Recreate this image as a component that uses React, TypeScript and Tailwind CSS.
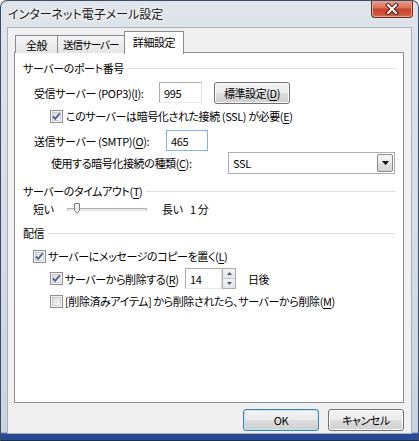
import React from "react";

const font = "font-['Noto_Sans_CJK_JP','Noto_Sans',sans-serif] [font-feature-settings:'palt']";

const Acc = ({ k }: { k: string }) => (
  <>
    (<span className="underline underline-offset-2">{k}</span>)
  </>
);

const Check = ({ checked }: { checked?: boolean }) => (
  <svg width="13" height="13" viewBox="0 0 13 13" className="shrink-0">
    <defs>
      <linearGradient id="cbg" x1="0" y1="0" x2="1" y2="1">
        <stop offset="0" stopColor="#d8d8d8" />
        <stop offset="1" stopColor="#fafafa" />
      </linearGradient>
    </defs>
    <rect x="0.5" y="0.5" width="12" height="12" fill="#f4f4f4" stroke="#8e8f8f" />
    <rect x="2.5" y="2.5" width="8" height="8" fill="url(#cbg)" stroke="#b8b8b8" strokeWidth="0.6" />
    {checked && (
      <path d="M3 6.3 L5.2 8.8 L9.8 3.2" fill="none" stroke="#4a5f97" strokeWidth="1.8" />
    )}
  </svg>
);

const GroupHeader = ({ children }: { children: React.ReactNode }) => (
  <div className="flex h-4 items-center">
    <span>{children}</span>
    <div className="ml-[4px] h-px flex-1 bg-[#d5dfe5]" />
  </div>
);

const Input = ({ value, w, focus }: { value: string; w: string; focus?: boolean }) => (
  <div
    className={`${w} flex h-[21px] shrink-0 items-center border bg-white pl-[4px] ${
      focus ? "border-[#7eb4ea]" : "border-[#abadb3] border-b-[#e3e9ef] border-r-[#dbdfe6]"
    }`}
  >
    {value}
  </div>
);

const Button = ({ children, w, primary }: { children: React.ReactNode; w: string; primary?: boolean }) => (
  <div
    className={`${w} flex h-[22px] shrink-0 items-center justify-center rounded-[3px] border ${
      primary ? "border-[#3c7fb1] shadow-[inset_0_0_0_1px_#c2e4f6]" : "border-[#707070] shadow-[inset_0_0_0_1px_#fcfcfc]"
    } bg-[linear-gradient(#f2f2f2_0%,#ebebeb_49%,#dddddd_50%,#cfcfcf_100%)]`}
  >
    {children}
  </div>
);

export default function App() {
  return (
    <div className={`${font} relative flex h-[441px] w-[419px] flex-col overflow-hidden whitespace-nowrap rounded-t-[7px] border border-[#3b4b66] border-b-[#1b2d55] bg-[linear-gradient(#dfe4ea,#d4dbe4_60%,#c9d3df_98.2%,#2a4b94_98.6%)] text-[11px] leading-4 tracking-[-0.4px] text-black`}>
      {/* title bar */}
      <div className="flex h-[26px] shrink-0 items-start justify-between pl-[7px]">
        <span className="mt-[5px] text-[12px] tracking-normal text-[#1a1a1a] [text-shadow:0_0_6px_#ffffff,0_0_3px_#ffffff]">
          インターネット電子メール設定
        </span>
        <div className="mr-[5px] mt-[-1px] flex h-[18px] w-[42px] items-center justify-center rounded-b-[4px] border border-t-0 border-[#6d2a20] bg-[linear-gradient(#e8a99a_0%,#d9715d_45%,#c8412a_55%,#d06447_100%)] shadow-[inset_0_0_0_1px_#eaa28f]">
          <svg width="14" height="12" viewBox="0 0 14 12">
            <path d="M3 2 L11 10 M11 2 L3 10" stroke="#4a1a12" strokeWidth="4" strokeLinecap="square" />
            <path d="M3 2 L11 10 M11 2 L3 10" stroke="#ffffff" strokeWidth="2" strokeLinecap="square" />
          </svg>
        </div>
      </div>

      {/* client area */}
      <div className="mx-[6px] flex h-[407px] flex-col border border-[#a6b0bd] bg-[#f0f0f0] pl-[6px] pr-[7px] pt-[3px]">
        {/* tabs */}
        <div className="relative z-10 flex h-[22px] items-end pl-px">
          <div className="flex h-[18px] w-[43px] items-center justify-center border border-b-0 border-[#898c95] bg-[linear-gradient(#f6f6f6,#e4e4e4)]">
            全般
          </div>
          <div className="flex h-[18px] w-[68px] items-center border border-b-0 border-l-0 border-[#898c95] bg-[linear-gradient(#f6f6f6,#e4e4e4)] pl-[5px] text-[10.5px] tracking-[-1px]">
            送信サーバー
          </div>
          <div className="-mb-px -ml-[2px] flex h-[23px] w-[60px] items-center justify-center border border-b-0 border-[#898c95] bg-white pb-[2px]">
            詳細設定
          </div>
        </div>

        {/* panel */}
        <div className="-mt-px flex h-[351px] w-[390px] flex-col border border-[#898c95] bg-white px-[8px]">
          <div className="mt-[7px]">
            <GroupHeader>サーバーのポート番号</GroupHeader>
          </div>

          <div className="mt-[5px] flex h-[23px] items-center pl-[11px]">
            <span className="w-[125px] shrink-0">
              受信サーバー (POP3)<Acc k="I" />:
            </span>
            <Input value="995" w="w-[43px]" />
            <div className="ml-[12px]">
              <Button w="w-[76px]">
                標準設定<Acc k="D" />
              </Button>
            </div>
          </div>

          <div className="mt-[4px] flex h-4 items-center gap-[3px] pl-[27px]">
            <Check checked />
            <span>
              このサーバーは暗号化された接続 (SSL) が必要<Acc k="E" />
            </span>
          </div>

          <div className="mt-[6px] flex h-[21px] items-center pl-[11px]">
            <span className="w-[132px] shrink-0">
              送信サーバー (SMTP)<Acc k="O" />:
            </span>
            <Input value="465" w="w-[42px]" focus />
          </div>

          <div className="mt-px flex h-[22px] items-center pl-[28px]">
            <span className="w-[177px] shrink-0">
              使用する暗号化接続の種類<Acc k="C" />:
            </span>
            <div className="flex h-[22px] flex-1 items-center justify-between border border-[#abadb3] bg-white pl-[4px] pr-px">
              <span>SSL</span>
              <div className="flex h-[18px] w-[16px] items-center justify-center rounded-[2px] border border-[#8a8a8a] bg-[linear-gradient(#f4f4f4_0%,#ececec_49%,#e0e0e0_50%,#d6d6d6_100%)]">
                <svg width="7" height="4" viewBox="0 0 7 4">
                  <path d="M0 0 H7 L3.5 4 Z" fill="#000" />
                </svg>
              </div>
            </div>
          </div>

          <div className="mt-[9px]">
            <GroupHeader>
              サーバーのタイムアウト<Acc k="T" />
            </GroupHeader>
          </div>

          <div className="mt-[2px] flex h-4 items-center pl-[10px]">
            <span className="w-[34px] shrink-0">短い</span>
            <div className="relative h-[12px] w-[80px] shrink-0">
              <div className="absolute left-0 right-0 top-[5px] h-[3px] border border-[#b0b0b0] border-b-[#e8e8e8] bg-[#e7eaea]" />
              <svg className="absolute left-[7px] top-[0px]" width="6" height="11" viewBox="0 0 6 11">
                <path d="M0.5 0.5 H5.5 V7.5 L3 10.5 L0.5 7.5 Z" fill="#eeeeee" stroke="#7b7b7b" />
              </svg>
            </div>
            <span className="ml-[15px] w-[28px] shrink-0">長い</span>
            <span>1 分</span>
          </div>

          <div className="mt-[8px]">
            <GroupHeader>配信</GroupHeader>
          </div>

          <div className="mt-[7px] flex h-4 items-center gap-[2px] pl-[10px]">
            <Check checked />
            <span>
              サーバーにメッセージのコピーを置く<Acc k="L" />
            </span>
          </div>

          <div className="mt-[4px] flex h-[21px] items-center pl-[27px]">
            <Check checked />
            <span className="ml-[2px] w-[120px] shrink-0">
              サーバーから削除する<Acc k="R" />
            </span>
            <Input value="14" w="w-[37px]" />
            <div className="flex h-[21px] w-[14px] shrink-0 flex-col border border-[#abadb3]">
              <div className="flex flex-1 items-center justify-center border-b border-[#c5cbd3] bg-[linear-gradient(#f3f3f3,#e3e6ea)]">
                <svg width="5" height="3" viewBox="0 0 5 3">
                  <path d="M0 3 L2.5 0 L5 3 Z" fill="#4d5a75" />
                </svg>
              </div>
              <div className="flex flex-1 items-center justify-center bg-[linear-gradient(#f3f3f3,#e3e6ea)]">
                <svg width="5" height="3" viewBox="0 0 5 3">
                  <path d="M0 0 L5 0 L2.5 3 Z" fill="#4d5a75" />
                </svg>
              </div>
            </div>
            <span className="ml-[12px]">日後</span>
          </div>

          <div className="mt-[4px] flex h-4 items-center gap-[2px] pl-[27px]">
            <Check />
            <span>
              [削除済みアイテム] から削除されたら、サーバーから削除<Acc k="M" />
            </span>
          </div>
        </div>

        {/* buttons */}
        <div className="mt-[6px] flex justify-end gap-[9px]">
          <Button w="w-[76px]" primary>
            OK
          </Button>
          <Button w="w-[76px]">キャンセル</Button>
        </div>
      </div>
    </div>
  );
}
